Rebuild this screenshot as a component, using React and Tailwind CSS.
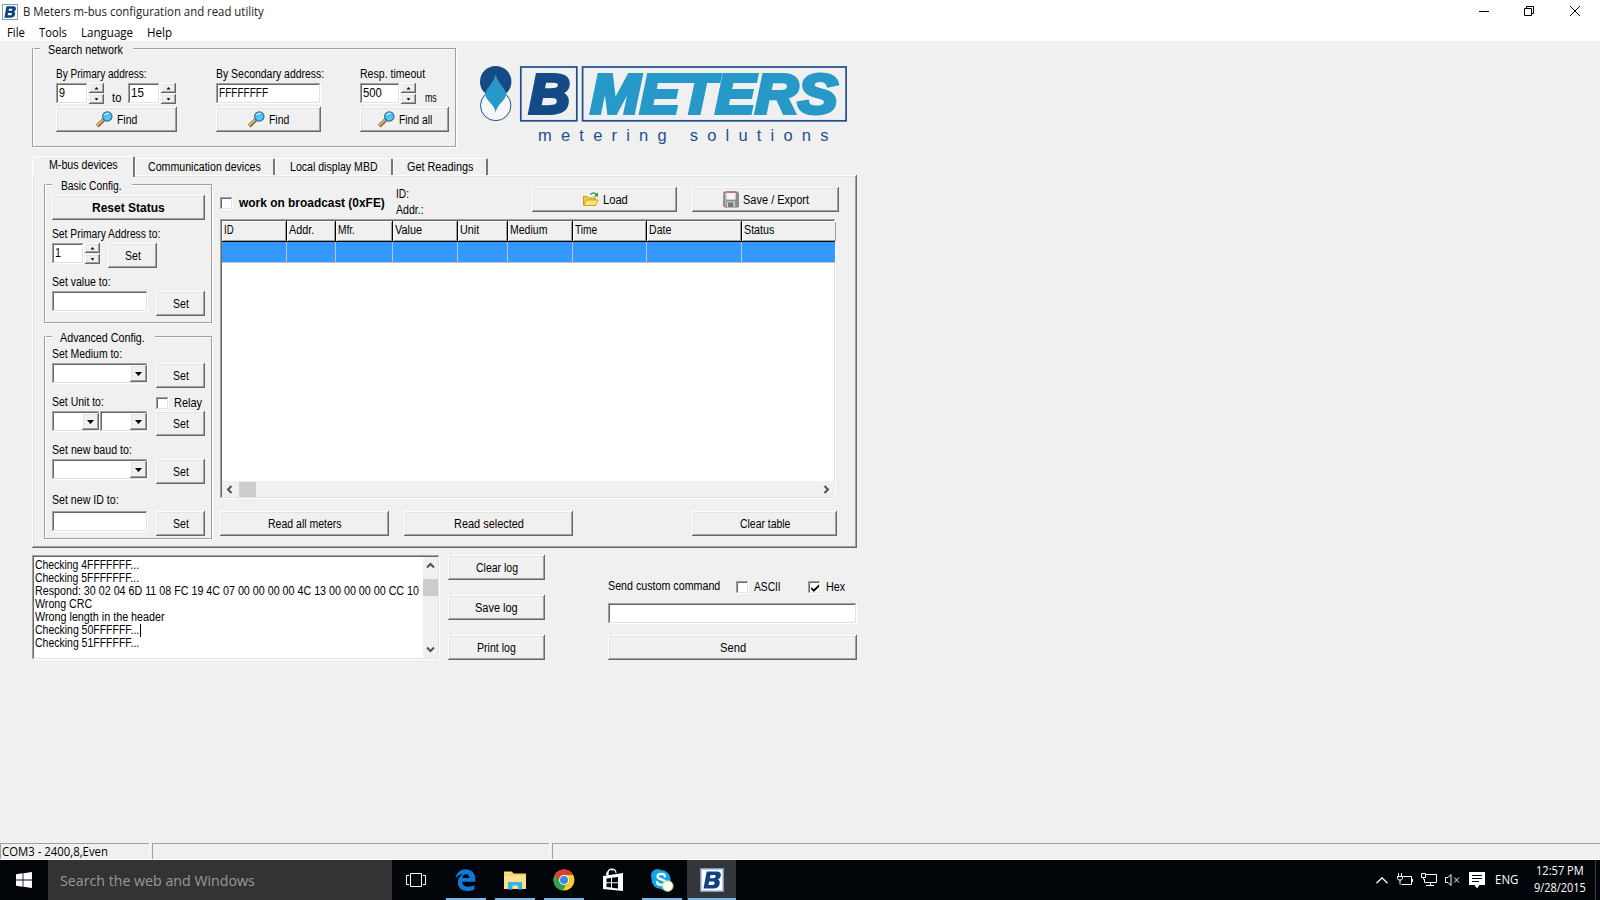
import React, { useLayoutEffect, useRef, useState } from "react";

const RAISED =
  "bg-[#f0f0f0] shadow-[inset_-1px_-1px_0_#696969,inset_1px_1px_0_#ffffff,inset_-2px_-2px_0_#a0a0a0,inset_2px_2px_0_#e3e3e3]";
const SUNKEN =
  "bg-white shadow-[inset_-1px_-1px_0_#ffffff,inset_1px_1px_0_#a0a0a0,inset_-2px_-2px_0_#e3e3e3,inset_2px_2px_0_#696969]";

/* One line of text condensed to an exact width. */
function Fit({ w, children, className = "" }) {
  const ref = useRef(null);
  const [scale, setScale] = useState(1);
  useLayoutEffect(() => {
    const natural = ref.current.offsetWidth;
    if (natural) setScale(w / natural);
  }, [w]);
  return (
    <span className={"block h-4 shrink-0 whitespace-nowrap leading-4 " + className} style={{ width: w }}>
      <span ref={ref} className="inline-block origin-left" style={{ transform: `scaleX(${scale})` }}>
        {children}
      </span>
    </span>
  );
}

function Button({ className = "", w, icon, children }) {
  return (
    <button className={"flex h-[25px] shrink-0 items-center justify-center gap-1 " + RAISED + " " + className}>
      {icon}
      <Fit w={w}>{children}</Fit>
    </button>
  );
}

function Group({ title, w, legend, className = "", body = "", children }) {
  const line = "h-[2px] border-t border-[#a0a0a0] bg-white";
  return (
    <div className={"flex shrink-0 flex-col " + className}>
      <div className="flex h-4 items-center">
        <div className={line + " w-2"} />
        <div className={"flex justify-center pr-[2px] pt-px " + legend}>
          <Fit w={w}>{title}</Fit>
        </div>
        <div className={line + " flex-1"} />
      </div>
      <div
        className={
          "-mt-[9px] flex border-x border-b border-[#a0a0a0] shadow-[1px_1px_0_#ffffff,inset_1px_0_0_#ffffff] " + body
        }
      >
        {children}
      </div>
    </div>
  );
}

function Spin({ value, vw, className = "" }) {
  return (
    <div className="flex h-[21px] gap-px">
      <div className={"h-[21px] pl-[3px] pt-[2px] " + SUNKEN + " " + className}>
        <Fit w={vw}>{value}</Fit>
      </div>
      <div className="flex w-[15px] flex-col gap-px">
        <div className={"flex h-[10px] items-center justify-center pr-px " + RAISED}>
          <svg width="5" height="3" viewBox="0 0 5 3"><path d="M2.5 0 4.500 2.400H.5z" /></svg>
        </div>
        <div className={"flex h-[10px] items-center justify-center pr-px " + RAISED}>
          <svg width="5" height="3" viewBox="0 0 5 3"><path d="M2.5 2.600 4.500.2H.5z" /></svg>
        </div>
      </div>
    </div>
  );
}

function Combo({ className = "" }) {
  return (
    <div className={"flex h-[21px] justify-end p-[2px] pr-[1px] " + SUNKEN + " " + className}>
      <div className={"flex h-[17px] w-[17px] items-center justify-center " + RAISED}>
        <svg width="7" height="4" viewBox="0 0 7 4"><path d="M0 0h7L3.500 4z" /></svg>
      </div>
    </div>
  );
}

function Check({ checked, className = "" }) {
  return (
    <div className={"flex h-[13px] w-[13px] shrink-0 items-center justify-center " + SUNKEN + " " + className}>
      {checked && (
        <svg width="8" height="8" viewBox="0 0 8 8"><path d="M.3 3v2.600L2.800 8 8 3V.4L2.800 5.300z" /></svg>
      )}
    </div>
  );
}

function Magnifier() {
  return (
    <svg width="17" height="17" viewBox="0 0 17 17">
      <path d="M1.200 15.200 7.800 8.600" stroke="#8a6a3a" strokeWidth="4" />
      <path d="M1 14.600 7.600 8" stroke="#d9b47a" strokeWidth="2" />
      <circle cx="11.300" cy="5.400" r="4.700" fill="#4fc0ee" stroke="#2c6c98" strokeWidth="1.100" />
      <path d="M8 4.600a3.400 3.400 0 0 1 6-1.400c-1.600-.3-4 .2-6 1.400z" fill="#d5f3ff" />
      <path d="M8.400 7a5 5 0 0 0 6-.6 3.600 3.600 0 0 1-6 .6z" fill="#9be4ff" />
    </svg>
  );
}

function FolderOpen() {
  return (
    <svg width="17" height="17" viewBox="0 0 17 17">
      <path d="M1.500 14V5.500h4l1.500 1.500h6.500V14z" fill="#f0c93c" stroke="#c89a1c" />
      <path d="M1.500 14.500 4.500 9h11.700l-3 5.500z" fill="#ffe777" stroke="#cf9f22" />
      <path d="M8.500 3.500c1.800-2 4.300-2 6 0" fill="none" stroke="#3a9c48" strokeWidth="1.400" />
      <path d="M16 1.500V5.500H11.900z" fill="#2e9440" />
    </svg>
  );
}

function Floppy() {
  return (
    <svg width="16" height="17" viewBox="0 0 16 17">
      <path d="M1 1h13.500l.8 1v14H1.800L.700 15z" fill="#8e8e8e" stroke="#777" />
      <rect x="2" y="2" width="1.300" height="13" fill="#b9b9b9" />
      <rect x="3.400" y="1" width="9.200" height="7.600" fill="#f4f4f6" />
      <rect x="3.400" y=".5" width="9.200" height="1.300" fill="#c64a50" />
      <rect x="4" y="10.500" width="8" height="5.500" fill="#d2d2d2" />
      <rect x="5" y="11.500" width="5.500" height="4.500" fill="#777" />
    </svg>
  );
}

function BIcon({ size }) {
  return (
    <svg width={size} height={size} viewBox="0 0 24 24" className="shrink-0">
      <rect x=".75" y=".75" width="22.500" height="22.500" fill="#fff" stroke="#7d9cc0" strokeWidth="1.500" />
      <path
        fillRule="evenodd"
        fill="#10427c"
        d="M6.700 3.500H17c3 0 4.300 1.700 3.800 4.200-.4 2-1.500 3.200-3 3.800 1.600.6 2.200 2 1.900 4-.5 3.200-2.700 5-6.200 5H3.500zM10.600 7l-.7 3.200h3.600c1.200 0 1.900-.6 2.100-1.700.2-1-.3-1.500-1.400-1.500zM9.200 13.500l-.8 3.500h3.800c1.400 0 2.200-.6 2.400-1.800.2-1.100-.4-1.700-1.600-1.700z"
      />
    </svg>
  );
}

function Logo() {
  return (
    <svg width="372" height="88" viewBox="478 62 372 88" className="ml-[22px] mt-[21px] shrink-0">
      <circle cx="495.700" cy="105.500" r="15.200" fill="#f4f6f8" stroke="#1d4f8f" />
      <circle cx="495.700" cy="81.700" r="15.700" fill="#144a86" />
      <path d="M495.700 74c1.500 9 10.300 14 10.300 20.500 0 6-8.800 9-10.300 18-1.500-9-10.300-12-10.300-18C485.400 88 494.200 83 495.700 74z" fill="#2699c8" />
      <rect x="520.800" y="67" width="56" height="53.800" fill="none" stroke="#1d4f8f" strokeWidth="1.700" />
      <rect x="582.600" y="67" width="263.500" height="53.800" fill="none" stroke="#1d4f8f" strokeWidth="1.700" />
      <text x="529" y="113.200" fontFamily="Liberation Sans, Arial, sans-serif" fontSize="55" fontWeight="700" fontStyle="italic" fill="#144a86" stroke="#144a86" strokeWidth="3.800" textLength="41" lengthAdjust="spacingAndGlyphs">B</text>
      <text x="590.500" y="113.200" fontFamily="Liberation Sans, Arial, sans-serif" fontSize="55" fontWeight="700" fontStyle="italic" fill="#2699c8" stroke="#2699c8" strokeWidth="3.800" textLength="247" lengthAdjust="spacingAndGlyphs">METERS</text>
      <text x="538" y="141" fontFamily="Liberation Sans, Arial, sans-serif" fontSize="16.500" fill="#1d4f8f" textLength="290.500" lengthAdjust="spacing">metering solutions</text>
    </svg>
  );
}

const COLUMNS = [
  ["ID", 10, "w-[65px]"],
  ["Addr.", 25, "w-[49px]"],
  ["Mfr.", 17, "w-[57px]"],
  ["Value", 27, "w-[65px]"],
  ["Unit", 19, "w-[50px]"],
  ["Medium", 37, "w-[65px]"],
  ["Time", 22, "w-[74px]"],
  ["Date", 22, "w-[95px]"],
  ["Status", 30, "w-[94px]"],
];

const LOG = [
  ["Checking 4FFFFFFF...", 104],
  ["Checking 5FFFFFFF...", 104],
  ["Respond: 30 02 04 6D 11 08 FC 19 4C 07 00 00 00 00 4C 13 00 00 00 00 CC 10", 384],
  ["Wrong CRC", 57],
  ["Wrong length in the header", 130],
  ["Checking 50FFFFFF...", 104],
  ["Checking 51FFFFFF...", 104],
];

function Chevron({ d }) {
  return (
    <svg width="9" height="9" viewBox="0 0 9 9" fill="none" stroke="#505050" strokeWidth="2"><path d={d} /></svg>
  );
}

function SetButton() {
  return <Button className="w-[49px]" w={16}>Set</Button>;
}

function SearchNetwork() {
  return (
    <Group title="Search network" w={75} legend="w-[93px]" className="w-[424px]" body="h-[99px] pl-[23px] pt-[18px]">
      <div className="w-[121px]">
        <Fit w={91}>By Primary address:</Fit>
        <div className="mt-px flex h-[21px]">
          <Spin value="9" vw={6} className="w-8" />
          <Fit w={9} className="ml-2 mt-[7px]">to</Fit>
          <div className="ml-[7px]"><Spin value="15" vw={13} className="w-8" /></div>
        </div>
        <Button className="mt-[3px] w-full" w={20} icon={<Magnifier />}>Find</Button>
      </div>
      <div className="ml-[39px] w-[105px]">
        <Fit w={108}>By Secondary address:</Fit>
        <div className={"mt-px h-[21px] pl-[3px] pt-[2px] " + SUNKEN}><Fit w={49}>FFFFFFFF</Fit></div>
        <Button className="mt-[3px] w-full" w={20} icon={<Magnifier />}>Find</Button>
      </div>
      <div className="ml-[39px] w-[89px]">
        <Fit w={65}>Resp. timeout</Fit>
        <div className="mt-px flex h-[21px]">
          <Spin value="500" vw={19} className="w-10" />
          <Fit w={12} className="ml-[9px] mt-[7px]">ms</Fit>
        </div>
        <Button className="mt-[3px] w-full" w={33} icon={<Magnifier />}>Find all</Button>
      </div>
    </Group>
  );
}

function Tab({ w, className, children }) {
  return (
    <div
      className={
        "flex h-[17px] shrink-0 justify-center rounded-t-[2px] border-l border-r-2 border-t border-l-white border-r-[#777] border-t-white " +
        className
      }
    >
      <Fit w={w}>{children}</Fit>
    </div>
  );
}

function ConfigColumn() {
  return (
    <div className="flex flex-col pt-[2px]">
      <Group title="Basic Config." w={61} legend="w-20" className="w-[168px]" body="h-[139px] flex-col pl-[7px] pt-[11px]">
        <Button className="w-[153px] font-bold" w={73}>Reset Status</Button>
        <Fit w={108} className="mt-[6px]">Set Primary Address to:</Fit>
        <div className="mt-px flex h-[25px]">
          <Spin value="1" vw={6} className="w-8" />
          <div className="ml-2"><SetButton /></div>
        </div>
        <Fit w={59} className="mt-[6px]">Set value to:</Fit>
        <div className="mt-px flex h-[25px] gap-2">
          <div className={"h-[21px] w-24 " + SUNKEN} />
          <SetButton />
        </div>
      </Group>
      <Group title="Advanced Config." w={85} legend="w-[103px]" className="mt-[6px] w-[168px]" body="h-[203px] flex-col pl-[7px] pt-[10px]">
        <Fit w={70}>Set Medium to:</Fit>
        <div className="mt-px flex gap-2"><Combo className="w-24" /><SetButton /></div>
        <div className="mt-[6px] flex h-4">
          <div className="w-[104px]"><Fit w={52}>Set Unit to:</Fit></div>
          <Check className="mt-[3px]" />
          <Fit w={28} className="ml-[5px] mt-px">Relay</Fit>
        </div>
        <div className="mt-px flex">
          <Combo className="w-12" /><Combo className="mr-2 w-12" /><SetButton />
        </div>
        <Fit w={80} className="mt-[6px]">Set new baud to:</Fit>
        <div className="mt-px flex gap-2"><Combo className="w-24" /><SetButton /></div>
        <Fit w={67} className="mt-2">Set new ID to:</Fit>
        <div className="mt-[3px] flex gap-2"><div className={"h-[21px] w-24 " + SUNKEN} /><SetButton /></div>
      </Group>
    </div>
  );
}

function DeviceTable() {
  return (
    <div className={"flex h-[280px] w-[616px] flex-col p-[2px] pr-px " + SUNKEN}>
      <div className="flex h-[21px] border-b border-black">
        {COLUMNS.map(([name, tw, cw], i) => (
          <div
            key={name}
            className={
              "shrink-0 bg-[#f0f0f0] pl-[2px] pt-px shadow-[inset_1px_1px_0_#ffffff,inset_-1px_-1px_0_#a0a0a0] " +
              (i < 8 ? "border-r border-black " : "") + cw
            }
          >
            <Fit w={tw}>{name}</Fit>
          </div>
        ))}
      </div>
      <div className="flex h-[21px] border-b border-[#c0c0c0] bg-[#3399ff]">
        {COLUMNS.map(([name, , cw], i) => (
          <div key={name} className={"shrink-0 " + (i < 8 ? "border-r border-[#c0c0c0] " : "") + cw} />
        ))}
      </div>
      <div className="flex-1" />
      <div className="flex h-4 items-center bg-[#f0f0f0] px-[3px] pr-1">
        <Chevron d="M6.500 1 3 4.500 6.500 8" />
        <div className="ml-[5px] h-[15px] w-[17px] bg-[#cdcdcd]" />
        <div className="flex-1" />
        <Chevron d="M2.500 1 6 4.500 2.500 8" />
      </div>
    </div>
  );
}

function DevicePanel() {
  return (
    <div className={"flex h-[373px] w-[825px] gap-2 pl-3 " + RAISED}>
      <ConfigColumn />
      <div className="flex flex-col pt-3">
        <div className="flex h-8 w-[619px]">
          <Check className="mt-[10px]" />
          <Fit w={146} className="ml-[6px] mt-2 font-bold">work on broadcast (0xFE)</Fit>
          <div className="-mt-px ml-[11px] w-[136px]">
            <Fit w={13}>ID:</Fit>
            <Fit w={28}>Addr.:</Fit>
          </div>
          <Button className="w-[145px]" w={25} icon={<FolderOpen />}>Load</Button>
          <Button className="ml-[15px] w-[147px]" w={66} icon={<Floppy />}>Save / Export</Button>
        </div>
        <DeviceTable />
        <div className="mt-3 flex">
          <Button className="w-[169px]" w={74}>Read all meters</Button>
          <Button className="ml-[15px] w-[169px]" w={70}>Read selected</Button>
          <Button className="ml-[119px] w-[145px]" w={50}>Clear table</Button>
        </div>
      </div>
    </div>
  );
}

function LogArea() {
  return (
    <div className="mt-[7px] flex">
      <div className={"flex h-[105px] w-[408px] p-[2px] " + SUNKEN}>
        <div className="flex-1 pl-px">
          {LOG.map(([line, w], i) => (
            <div key={i} className="flex h-[13px]">
              <Fit w={w}>{line}</Fit>
              {i === 5 && <span className="ml-px mt-[2px] h-[13px] w-px bg-black" />}
            </div>
          ))}
        </div>
        <div className="flex w-[15px] flex-col items-center bg-[#f0f0f0] py-1">
          <Chevron d="M1 6.500 4.500 3 8 6.500" />
          <div className="mt-[9px] h-[17px] w-full bg-[#cdcdcd]" />
          <div className="flex-1" />
          <Chevron d="M1 2.500 4.500 6 8 2.500" />
        </div>
      </div>
      <div className="ml-2 flex flex-col gap-[15px]">
        <Button className="w-[97px]" w={42}>Clear log</Button>
        <Button className="w-[97px]" w={43}>Save log</Button>
        <Button className="w-[97px]" w={39}>Print log</Button>
      </div>
      <div className="ml-[63px] w-[249px]">
        <div className="mt-[23px] flex h-4">
          <Fit w={112}>Send custom command</Fit>
          <Check className="ml-4 mt-[3px]" />
          <Fit w={27} className="ml-[5px] mt-px">ASCII</Fit>
          <Check checked className="ml-[27px] mt-[3px]" />
          <Fit w={19} className="ml-[5px] mt-px">Hex</Fit>
        </div>
        <div className={"mt-[9px] h-[21px] " + SUNKEN} />
        <Button className="mt-[11px] w-full" w={26}>Send</Button>
      </div>
    </div>
  );
}

function TaskItem({ className = "", line = "", children }) {
  return (
    <div className={"flex h-10 w-[49px] shrink-0 flex-col items-center " + className}>
      <div className="flex h-[38px] items-center pt-[2px]">{children}</div>
      <div className={"h-[2px] " + line} />
    </div>
  );
}

function Taskbar() {
  const open = "w-10 bg-[#76b9ed]";
  return (
    <div className="flex h-10 shrink-0 bg-[#010409] font-['Open_Sans','Noto_Sans',sans-serif] text-white">
      <div className="flex w-12 items-center justify-center">
        <svg width="16" height="16" viewBox="0 0 16 16" fill="#fff">
          <path d="M0 2.200 6.600 1.300v6.300H0zM7.400 1.200 16 0v7.600H7.400zM0 8.400h6.600v6.300L0 13.800zM7.400 8.400H16V16l-8.600-1.200z" />
        </svg>
      </div>
      <div className="flex w-[344px] items-center bg-[#333333] pl-3 text-[15px] text-[#999999]">
        <Fit w={195}>Search the web and Windows</Fit>
      </div>
      <TaskItem>
        <svg width="20" height="16" viewBox="0 0 20 16" fill="none" stroke="#fff" className="ml-[-1px]">
          <path d="M4.500 1.500h11v13h-11zM3 3.500H.5v9H3M17 3.500h2.500v9H17" />
        </svg>
      </TaskItem>
      <TaskItem line={open}>
        <svg width="21" height="22" viewBox="0 0 21 22">
          <path fill="#0c7ad8" d="M.3 9.800C1.300 3.500 5.500.200 10.700.200c6 0 9.600 4.300 9.600 9.800v2.700H7.100c.1 3.400 3 5 6.300 5 2.300 0 4.300-.6 6-1.600v4.300c-2 1-4.300 1.500-6.900 1.500C6.600 21.900 2.800 18.400 2.800 13.400c0-4 2.300-6.700 5.600-8.300C5 5.500 2 7.300.3 9.800zM7.300 9h7.100c0-2.300-1.200-3.800-3.300-3.800C9 5.200 7.700 6.800 7.300 9z" />
        </svg>
      </TaskItem>
      <TaskItem line={open}>
        <svg width="22" height="19" viewBox="0 0 22 19">
          <path d="M0 .5h8l1.500 2H22V18H0z" fill="#f4cf6a" />
          <path d="M0 4.500h22V18H0z" fill="#fbe08d" />
          <path d="M1 1.500h6v1H1z" fill="#fff3b8" />
          <path d="M4 11h14v7.500h-4v-4H8.500v4H4z" fill="#35b5e5" />
        </svg>
      </TaskItem>
      <TaskItem line={open}>
        <svg width="22" height="22" viewBox="0 0 22 22">
          <circle cx="11" cy="11" r="10.500" fill="#f7cd2b" />
          <path d="M11 11 1.900 5.700a10.500 10.500 0 0 0 7.800 15.700l4.500-7.700z" fill="#31a350" />
          <path d="M1.900 5.700A10.500 10.500 0 0 1 20.200 6H11a5 5 0 0 0-4.600 6.800z" fill="#db3f32" />
          <circle cx="11" cy="11" r="5" fill="#f5f5f5" />
          <circle cx="11" cy="11" r="4" fill="#4384e8" />
        </svg>
      </TaskItem>
      <TaskItem>
        <svg width="22" height="24" viewBox="0 0 22 24">
          <path d="M6 8V5c0-5 8-5.500 8 0M4.500 7C5.500 2 9 0 11 2.500" fill="none" stroke="#fff" strokeWidth="1.200" />
          <path d="M1 8 21 5v18L1 21z" fill="#fff" />
          <path d="M4.500 10.500 9 9.900v4.300H4.500zM10 9.700l6-.8v5.300h-6zM4.500 15.200H9v4.300l-4.500-.6zM10 15.200h6v5.300l-6-.8z" fill="#010409" />
        </svg>
      </TaskItem>
      <TaskItem line={open}>
        <svg width="24" height="24" viewBox="0 0 24 24">
          <circle cx="7.500" cy="7.500" r="6.500" fill="#12a5e8" />
          <circle cx="15" cy="16" r="6.500" fill="#12a5e8" />
          <circle cx="11" cy="11.500" r="9.500" fill="#12a5e8" />
          <path d="M15 8.300C14.500 5 7.500 5 7.500 8.500c0 3.700 7.500 2 7.500 5.700 0 3.500-7.300 3.500-8 0" fill="none" stroke="#fff" strokeWidth="2.300" strokeLinecap="round" />
          <circle cx="17.800" cy="18" r="5.300" fill="#fff" stroke="#b8e05a" />
        </svg>
      </TaskItem>
      <TaskItem className="ml-px w-[48px] bg-[#33373c]" line="w-12 bg-[#76b9ed]"><BIcon size={24} /></TaskItem>
      <div className="flex-1" />
      <div className="flex items-center">
        <svg width="12" height="7" viewBox="0 0 12 7" fill="none" stroke="#fff" strokeWidth="1.300"><path d="M.5 6.300 6 .8l5.500 5.500" /></svg>
        <svg width="17" height="14" viewBox="0 0 17 14" fill="none" stroke="#fff" className="ml-[9px]">
          <path d="M6 3.500h8.500v8H4.500M15.500 6v3M1.500 0v3M4.500 0v3M.5 3.500h5v2l-1 1.500h-3l-1-1.500zM3 7v4.500" />
        </svg>
        <svg width="17" height="14" viewBox="0 0 17 14" fill="none" stroke="#fff" className="ml-[7px]">
          <path d="M5 1.500h10.500v8H3.500V6M5 12.500h8M9.500 10v2.500M.5.500h4v4h-4zM2.500 4.500v2" />
        </svg>
        <svg width="15" height="12" viewBox="0 0 15 12" fill="none" stroke="#fff" className="ml-[7px]">
          <path d="M.5 3.500H3l3-3v11l-3-3H.5zM9 3.500l5 5M14 3.500l-5 5" />
        </svg>
        <svg width="16" height="17" viewBox="0 0 16 17" className="ml-[9px]">
          <path d="M0 0h16v13H10.500L8 16.500 5.500 13H0z" fill="#fff" />
          <path d="M3 3.500h10M3 6.500h10M3 9.500h7" stroke="#010409" />
        </svg>
        <Fit w={23} className="ml-[10px] text-[12px]">ENG</Fit>
        <div className="ml-[15px] mr-[9px] flex w-[53px] flex-col items-center text-[12px]">
          <Fit w={48} className="-mt-px">12:57 PM</Fit>
          <Fit w={52} className="mt-px">9/28/2015</Fit>
        </div>
        <div className="h-10 w-[5px] border-l border-[#3c4045]" />
      </div>
    </div>
  );
}

export default function App() {
  return (
    <div className="flex h-[900px] w-[1600px] flex-col overflow-hidden bg-[#f0f0f0] font-['Liberation_Sans',Arial,sans-serif] text-[12.5px] text-black">
      <div className="flex h-6 shrink-0 items-center bg-white pl-[2px] pr-[20px] font-['Open_Sans','Noto_Sans',sans-serif] text-[12px]">
        <div className="-mt-px"><BIcon size={16} /></div>
        <Fit w={241} className="ml-[5px] text-[#222]">B Meters m-bus configuration and read utility</Fit>
        <div className="flex-1" />
        <svg width="102" height="12" viewBox="0 0 102 12" fill="none" stroke="#000" className="mb-[3px]">
          <path d="M1 6.500h10M46.500 3.500h7v7h-7zM48.500 3V1.500h7v7H54M92 1l10 10M102 1 92 11" />
        </svg>
      </div>
      <div className="flex h-[17px] shrink-0 items-center bg-white pl-[7px] font-['Open_Sans','Noto_Sans',sans-serif] text-[12px]">
        <Fit w={18}>File</Fit>
        <Fit w={28} className="ml-[14px]">Tools</Fit>
        <Fit w={52} className="ml-[14px]">Language</Fit>
        <Fit w={25} className="ml-[14px]">Help</Fit>
      </div>
      <div className="flex flex-1 flex-col pl-8">
        <div className="flex h-[115px]">
          <SearchNetwork />
          <Logo />
        </div>
        <div className="flex h-[19px] items-end">
          <div className="relative z-10 -mb-[2px] flex h-[21px] w-[103px] justify-center rounded-t-[2px] border-l border-r-2 border-t border-l-white border-r-[#777] border-t-white bg-[#f0f0f0]">
            <Fit w={69}>M-bus devices</Fit>
          </div>
          <Tab w={113} className="w-[140px]">Communication devices</Tab>
          <Tab w={88} className="w-[118px]">Local display MBD</Tab>
          <Tab w={66} className="w-[95px]">Get Readings</Tab>
        </div>
        <DevicePanel />
        <LogArea />
      </div>
      <div className="flex h-[17px] shrink-0 gap-[3px] border-b border-white text-[12px]">
        <div className="w-[149px] border-l border-t border-[#a0a0a0] pl-px font-['Open_Sans','Noto_Sans',sans-serif] shadow-[1px_0_0_#fff]">
          <Fit w={106}>COM3 - 2400,8,Even</Fit>
        </div>
        <div className="w-[397px] border-l border-t border-[#a0a0a0] shadow-[1px_0_0_#fff]" />
        <div className="flex-1 border-l border-t border-[#a0a0a0]" />
      </div>
      <Taskbar />
    </div>
  );
}
